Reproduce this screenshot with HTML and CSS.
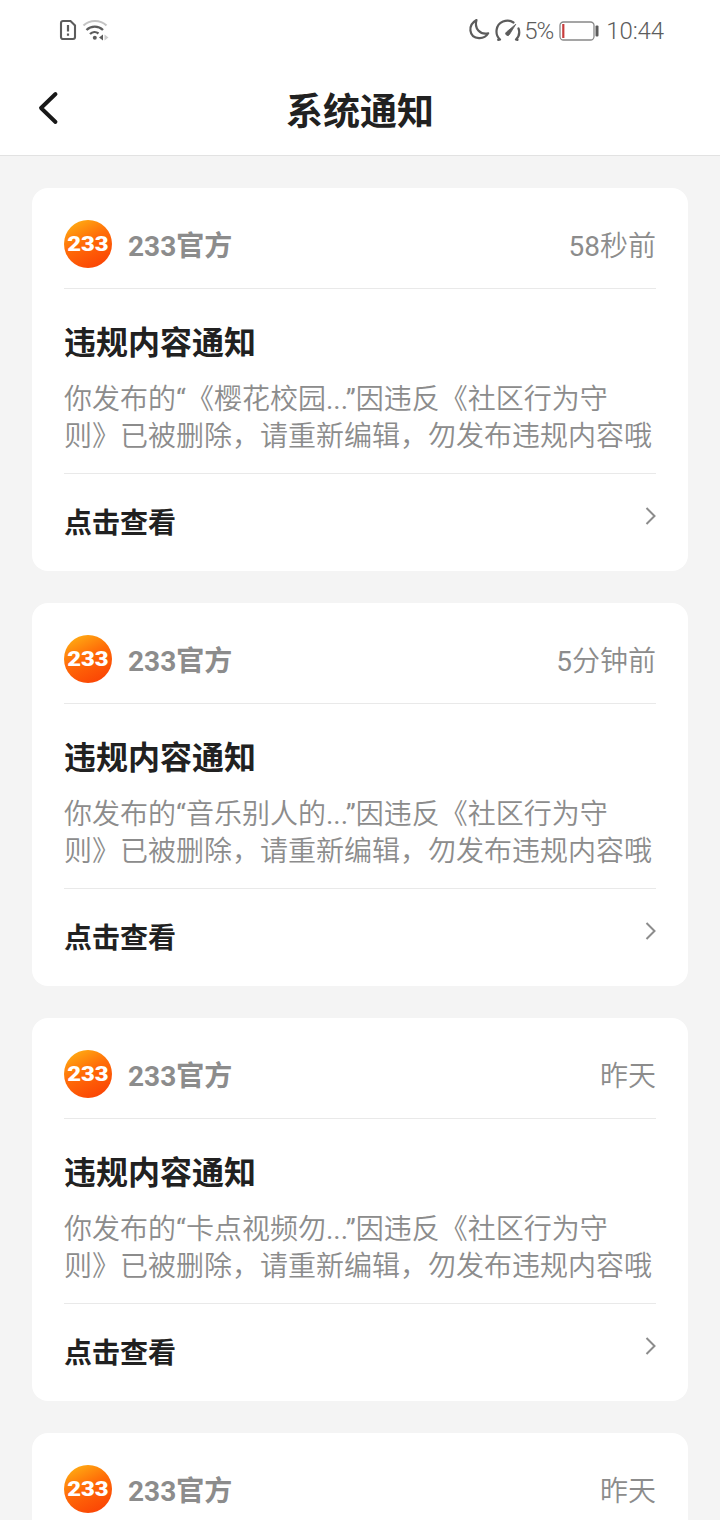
FILE: index.html
```html
<!DOCTYPE html>
<html lang="zh-CN">
<head>
<meta charset="utf-8">
<title>系统通知</title>
<link rel="stylesheet" href="styles.css">
</head>
<body>
<svg class="defs" width="0" height="0">
  <defs>
    <linearGradient id="orange" x1="0.1" y1="0" x2="0.6" y2="1">
      <stop offset="0" stop-color="#ffb414"/>
      <stop offset="0.5" stop-color="#ff6c08"/>
      <stop offset="1" stop-color="#fb4705"/>
    </linearGradient>
    <symbol id="logo" viewBox="0 0 48 48">
      <circle cx="24" cy="24" r="24" fill="url(#orange)"/>
      <text class="logo-text" x="3.200" y="31" textLength="41.500" lengthAdjust="spacingAndGlyphs">233</text>
    </symbol>
    <symbol id="chevron" viewBox="0 0 12 20">
      <path d="M2.500 2l8 8-8 8" fill="none" stroke="#8c8c8c" stroke-width="2"/>
    </symbol>
  </defs>
</svg>
<header class="top">
  <div class="status">
    <svg width="50" height="24" viewBox="0 0 50 24" fill="none" stroke="#5c5c5c">
      <path d="M4 2h7.500l4.500 4.500v11.500a2 2 0 0 1-2 2h-10a2 2 0 0 1-2-2v-14a2 2 0 0 1 2-2z" stroke-width="2.100"/>
      <path d="M9 6v6.500M9 14.500v2.200" stroke-width="2.200"/>
      <path d="M24.500 6.500c6.500-6 16.500-6 23 0" stroke="#c4c4c4" stroke-width="2.200"/>
      <path d="M27.500 11c4.500-4.500 12-4.500 16.500 0M31 15c2.500-2.500 6-2.500 8.500-.5" stroke-width="2.300"/>
      <circle cx="35.800" cy="18.700" r="2" fill="#5c5c5c" stroke="none"/>
      <path d="M44 15.500v6l-4-3z" fill="#5c5c5c" stroke="none"/>
      <path d="M45.500 15.500v6l4-3z" fill="#ccc" stroke="none"/>
    </svg>
    <div class="status-right">
      <svg class="modes" width="56" height="26" viewBox="0 0 56 26" fill="none" stroke="#5c5c5c" stroke-width="2.200" stroke-linecap="round" stroke-linejoin="round">
        <path d="M8.500 3c-9 5-8 17.500 2.500 18.200 4 .2 7.300-1.700 9.200-4.900C12 18 6 11.500 8.500 3z"/>
        <path d="M32 22.500c-5.500-5-4.500-15 3-18 3.600-1.400 7.500-1 10.500 1M50.500 11.500c1.500 4 .5 8-2.500 11M32 22.500l-1.800.3M48 22.500l1.500.3"/>
        <path d="M47.500 7.500l-9 7.500a2 2 0 1 0 3 2.500z" fill="#5c5c5c" stroke-width=".8"/>
      </svg>
      <span class="percent">5%</span>
      <svg class="battery" width="40" height="20" viewBox="0 0 40 20">
        <rect x="1" y="1" width="34" height="18" rx="3.500" fill="none" stroke="#888" stroke-width="1.300"/>
        <rect x="3.200" y="3" width="2.200" height="14" fill="#c73d3d"/>
        <rect x="36.500" y="4.500" width="3" height="11" rx="1" fill="#5c5c5c"/>
      </svg>
      <span class="clock">10:44</span>
    </div>
  </div>
  <div class="nav">
    <svg class="back" width="22" height="36" viewBox="0 0 22 36"><path d="M17.500 4L3 18l14.500 14" fill="none" stroke="#181818" stroke-width="3.900" stroke-linecap="round" stroke-linejoin="round"/></svg>
    <h1>系统通知</h1>
  </div>
</header>
<main class="list">
  <article class="card">
    <div class="sender"><svg class="avatar"><use href="#logo"/></svg><b>233官方</b><time>58秒前</time></div>
    <div class="content"><h2>违规内容通知</h2><p>你发布的“《樱花校园...”因违反《社区行为守<br>则》已被删除，请重新编辑，勿发布违规内容哦</p></div>
    <div class="action"><span>点击查看</span><svg class="chevron"><use href="#chevron"/></svg></div>
  </article>
  <article class="card">
    <div class="sender"><svg class="avatar"><use href="#logo"/></svg><b>233官方</b><time>5分钟前</time></div>
    <div class="content"><h2>违规内容通知</h2><p>你发布的“音乐别人的...”因违反《社区行为守<br>则》已被删除，请重新编辑，勿发布违规内容哦</p></div>
    <div class="action"><span>点击查看</span><svg class="chevron"><use href="#chevron"/></svg></div>
  </article>
  <article class="card">
    <div class="sender"><svg class="avatar"><use href="#logo"/></svg><b>233官方</b><time>昨天</time></div>
    <div class="content"><h2>违规内容通知</h2><p>你发布的“卡点视频勿...”因违反《社区行为守<br>则》已被删除，请重新编辑，勿发布违规内容哦</p></div>
    <div class="action"><span>点击查看</span><svg class="chevron"><use href="#chevron"/></svg></div>
  </article>
  <article class="card cut">
    <div class="sender"><svg class="avatar"><use href="#logo"/></svg><b>233官方</b><time>昨天</time></div>
  </article>
</main>
</body>
</html>
```
FILE: styles.css
```css
* { box-sizing: border-box; }
body {
  margin: 0;
  height: 1520px;
  overflow: hidden;
  display: flex;
  flex-direction: column;
  background: #f4f4f4;
  color: #212121;
  font-family: Roboto, "Noto Sans CJK SC", sans-serif;
  text-spacing-trim: space-all;
}
.defs { position: absolute; }
h1, h2, p { margin: 0; }
.top {
  flex: none;
  height: 156px;
  background: #fff;
  border-bottom: 1px solid #e2e2e2;
}
.status {
  height: 62px;
  padding: 0 56px 0 59px;
  display: flex;
  align-items: center;
  justify-content: space-between;
  color: #5c5c5c;
  font-size: 24px;
}
.status-right { display: flex; align-items: center; }
.modes { margin-top: -2px; }
.percent { width: 30px; letter-spacing: -1px; font-weight: 300; }
.battery { margin: 0 7px 0 5px; }
.clock { font-weight: 300; letter-spacing: -.1px; }
.nav {
  height: 93px;
  padding: 0 38px;
  display: grid;
  grid-template-columns: 22px 1fr 22px;
  align-items: center;
}
.nav .back { margin-bottom: 1px; }
h1 { padding-top: 8px; text-align: center; font-size: 37px; font-weight: 700; line-height: 54px; }
.list {
  padding: 32px 32px 0;
  display: flex;
  flex-direction: column;
  gap: 32px;
}
.card {
  flex: none;
  height: 383px;
  padding: 0 32px;
  border-radius: 16px;
  background: #fff;
}
.cut { height: 120px; }
.sender {
  height: 101px;
  padding-top: 12px;
  border-bottom: 1px solid #e9e9e9;
  display: flex;
  align-items: center;
  color: #8c8c8c;
  font-size: 28px;
  line-height: 40px;
}
.avatar { width: 48px; height: 48px; margin-right: 16px; }
.sender b, .sender time { padding-top: 5px; }
.sender time { margin-left: auto; }
.sender time, p { font-family: Roboto, "Noto Sans CJK SC DemiLight", "Noto Sans CJK SC", sans-serif; }
.logo-text { font: 900 20px Roboto, sans-serif; fill: #fff; }
.content {
  height: 185px;
  padding-top: 31px;
  border-bottom: 1px solid #e9e9e9;
}
h2 { font-size: 32px; line-height: 46px; font-weight: 700; }
p {
  padding-top: 15px;
  color: #8c8c8c;
  font-size: 28px;
  font-weight: 400;
  line-height: 37px;
  white-space: nowrap;
}
.action {
  height: 97px;
  padding-bottom: 4px;
  display: flex;
  align-items: center;
  justify-content: space-between;
  font-size: 28px;
  font-weight: 700;
}
.chevron { width: 12px; height: 20px; margin-bottom: 9px; }
```
